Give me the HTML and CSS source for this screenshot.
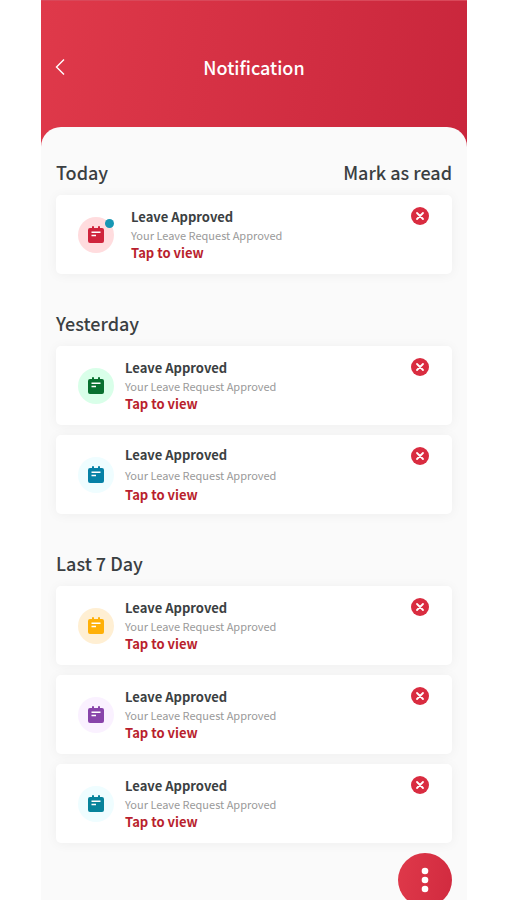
FILE: index.html
```html
<!DOCTYPE html>
<html lang="en">
<head>
	<meta charset="UTF-8">
	<meta name="viewport" content="width=device-width, initial-scale=1">
	<title>Notification</title>
	<link rel="stylesheet" href="styles.css">
</head>
<body>
	<!-- shared icons -->
	<svg class="sprite" aria-hidden="true">
		<symbol id="note" viewBox="0 0 16 18">
			<path fill="currentColor" d="M2 2h2V1a1 1 0 0 1 2 0v1h4V1a1 1 0 0 1 2 0v1h2a2 2 0 0 1 2 2v11a2 2 0 0 1-2 2H2a2 2 0 0 1-2-2V4a2 2 0 0 1 2-2z"/>
			<path fill="none" stroke="#fff" stroke-width="1.5" d="M3.500 6.200h9M3.500 9.400h4.500"/>
		</symbol>
		<symbol id="cross" viewBox="0 0 18 18">
			<path fill="none" stroke="#fff" stroke-width="1.800" stroke-linecap="round" d="M6 6l6 6M12 6l-6 6"/>
		</symbol>
	</svg>

	<div class="screen">
		<header class="header">
			<button class="back" type="button" aria-label="Back">
				<svg width="10" height="18" viewBox="0 0 10 18"><path fill="none" stroke="#fff" stroke-width="1.400" d="M9 1.500L1.500 9L9 16.500"/></svg>
			</button>
			<h1>Notification</h1>
		</header>

		<main class="panel">
			<!-- Today -->
			<section class="group">
				<div class="group-head">
					<h2>Today</h2>
					<button class="mark" type="button">Mark as read</button>
				</div>
				<article class="card unread">
					<span class="badge red"><svg><use href="#note"/></svg><i class="dot"></i></span>
					<div class="info">
						<h3>Leave Approved</h3>
						<p>Your Leave Request Approved</p>
						<a href="#">Tap to view</a>
					</div>
					<button class="close" type="button" aria-label="Remove"><svg><use href="#cross"/></svg></button>
				</article>
			</section>

			<!-- Yesterday -->
			<section class="group">
				<div class="group-head">
					<h2>Yesterday</h2>
				</div>
				<article class="card">
					<span class="badge green"><svg><use href="#note"/></svg></span>
					<div class="info">
						<h3>Leave Approved</h3>
						<p>Your Leave Request Approved</p>
						<a href="#">Tap to view</a>
					</div>
					<button class="close" type="button" aria-label="Remove"><svg><use href="#cross"/></svg></button>
				</article>
				<article class="card roomy">
					<span class="badge blue"><svg><use href="#note"/></svg></span>
					<div class="info">
						<h3>Leave Approved</h3>
						<p>Your Leave Request Approved</p>
						<a href="#">Tap to view</a>
					</div>
					<button class="close" type="button" aria-label="Remove"><svg><use href="#cross"/></svg></button>
				</article>
			</section>

			<!-- Last 7 Day -->
			<section class="group">
				<div class="group-head">
					<h2>Last 7 Day</h2>
				</div>
				<article class="card">
					<span class="badge yellow"><svg><use href="#note"/></svg></span>
					<div class="info">
						<h3>Leave Approved</h3>
						<p>Your Leave Request Approved</p>
						<a href="#">Tap to view</a>
					</div>
					<button class="close" type="button" aria-label="Remove"><svg><use href="#cross"/></svg></button>
				</article>
				<article class="card">
					<span class="badge purple"><svg><use href="#note"/></svg></span>
					<div class="info">
						<h3>Leave Approved</h3>
						<p>Your Leave Request Approved</p>
						<a href="#">Tap to view</a>
					</div>
					<button class="close" type="button" aria-label="Remove"><svg><use href="#cross"/></svg></button>
				</article>
				<article class="card">
					<span class="badge teal"><svg><use href="#note"/></svg></span>
					<div class="info">
						<h3>Leave Approved</h3>
						<p>Your Leave Request Approved</p>
						<a href="#">Tap to view</a>
					</div>
					<button class="close" type="button" aria-label="Remove"><svg><use href="#cross"/></svg></button>
				</article>
			</section>

			<button class="more" type="button" aria-label="More">
				<svg width="8" height="26" viewBox="0 0 8 26" fill="#fff"><circle cx="4" cy="4" r="3.300"/><circle cx="4" cy="13" r="3.300"/><circle cx="4" cy="22" r="3.300"/></svg>
			</button>
		</main>
	</div>
</body>
</html>
```

FILE: styles.css
```css
* {
	box-sizing: border-box;
}
body {
	margin: 0;
	background: #fff;
	color: #3b3f42;
	font-family: "Noto Sans CJK SC", "Noto Sans", sans-serif;
}
h1, h2, h3, p {
	margin: 0;
}
button {
	padding: 0;
	border: none;
	background: none;
	color: inherit;
	font-family: inherit;
	cursor: pointer;
}
.sprite {
	display: none;
}
.screen {
	height: 100vh;
	margin: 0 40px 0 41px;
	overflow-y: auto;
	scrollbar-width: none;
	background: #fafafa;
}

/* header */
.header {
	display: grid;
	grid-template-columns: 24px 1fr 24px;
	align-items: center;
	height: 147px;
	padding: 0 14px 14px;
	border-top: 1px solid #d9485a;
	background: linear-gradient(100deg, #df394a, #c9263c);
	color: #fff;
}
.header h1 {
	font-size: 18px;
	font-weight: 500;
	line-height: 28px;
	text-align: center;
}
.back {
	display: flex;
}

/* list */
.panel {
	position: relative;
	display: flex;
	flex-direction: column;
	gap: 36px;
	margin-top: -20px;
	padding: 32px 15px 20px;
	border-radius: 20px 20px 0 0;
	background: #fafafa;
}
.group {
	display: flex;
	flex-direction: column;
	gap: 10px;
}
.group-head {
	display: flex;
	justify-content: space-between;
}
.group-head h2, .mark {
	font-size: 18px;
	font-weight: 500;
	line-height: 26px;
}
.card {
	display: flex;
	align-items: center;
	min-height: 79px;
	padding: 12px 23px 12px 22px;
	border-radius: 5px;
	background: #fff;
	box-shadow: 0 1px 12px rgba(0, 0, 0, .05);
}
.badge {
	position: relative;
	display: flex;
	align-items: center;
	justify-content: center;
	width: 36px;
	height: 36px;
	margin-right: 11px;
	border-radius: 50%;
}
.unread .badge {
	margin-right: 17px;
}
.badge svg {
	width: 16px;
	height: 18px;
}
.dot {
	position: absolute;
	top: 2px;
	right: 0;
	width: 9px;
	height: 9px;
	border-radius: 50%;
	background: #1797b4;
}
.red {
	background: #ffdcde;
	color: #cf243c;
}
.green {
	background: #d9ffe9;
	color: #08702f;
}
.blue {
	background: #effdff;
	color: #0681a6;
}
.yellow {
	background: #ffefd3;
	color: #ffb007;
}
.purple {
	background: #faf1ff;
	color: #8844aa;
}
.teal {
	background: #effdff;
	color: #07839b;
}
.info {
	flex: 1;
	line-height: 18px;
}
.info h3 {
	font-size: 13px;
	font-weight: 700;
}
.info p {
	color: #999;
	font-size: 11px;
}
.info a {
	display: block;
	color: #b91f2e;
	font-size: 13px;
	font-weight: 700;
	text-decoration: none;
}
.roomy {
	padding-top: 10px;
	padding-bottom: 9px;
}
.roomy .info {
	line-height: 20px;
}
.close {
	align-self: flex-start;
	display: flex;
	width: 18px;
	height: 18px;
	border-radius: 50%;
	background: #d92c40;
}
.roomy .close {
	margin-top: 2px;
}
.close svg {
	width: 18px;
	height: 18px;
}
.more {
	display: flex;
	align-items: center;
	justify-content: center;
	align-self: flex-end;
	width: 54px;
	height: 54px;
	margin-top: -26px;
	border-radius: 50%;
	background: linear-gradient(100deg, #df394a, #d12a3f);
}
```
